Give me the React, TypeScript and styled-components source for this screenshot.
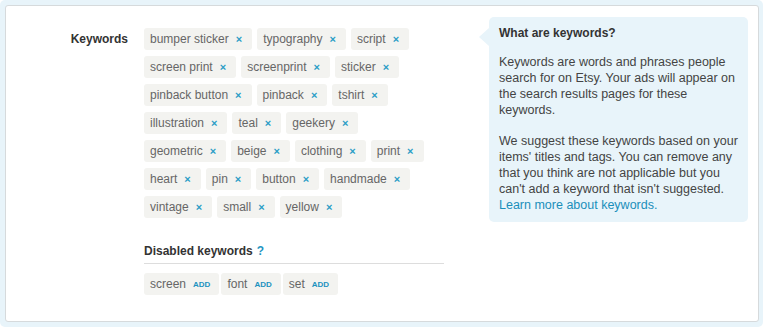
import React from "react";
import styled, { createGlobalStyle } from "styled-components";

const GlobalStyle = createGlobalStyle`
  html, body {
    margin: 0;
    padding: 0;
    background: #ffffff;
  }
  body {
    font-family: "Liberation Sans", Arial, Helvetica, sans-serif;
    -webkit-font-smoothing: antialiased;
  }
`;

const Frame = styled.div`
  box-sizing: border-box;
  width: 763px;
  height: 327px;
  padding: 5px 4px 5px 5px;
  background: #e8f4fa;
  border-radius: 5px;
`;

const Card = styled.div`
  box-sizing: border-box;
  height: 100%;
  display: flex;
  align-items: flex-start;
  background: #ffffff;
  border: 1px solid #d6dadc;
  border-radius: 3px;
`;

const Main = styled.div`
  display: grid;
  grid-template-columns: 122px 300px;
  column-gap: 16px;
  padding-top: 22px;
`;

const Label = styled.div`
  text-align: right;
  font-size: 12px;
  font-weight: bold;
  line-height: 22px;
  color: #333333;
`;

const TagList = styled.div<{ $gap?: string; $width?: number }>`
  display: flex;
  flex-wrap: wrap;
  gap: ${(p) => p.$gap ?? "6px 5px"};
  width: ${(p) => (p.$width ? `${p.$width}px` : "auto")};
`;

const Tag = styled.span<{ $padRight?: number }>`
  display: inline-flex;
  align-items: center;
  height: 22px;
  padding: 0 ${(p) => p.$padRight ?? 10}px 0 6px;
  background: #f3f3f0;
  border-radius: 3px;
  font-size: 12px;
  color: #666666;
  white-space: nowrap;
`;

const Remove = styled.span`
  margin-left: 7px;
  font-size: 11px;
  font-weight: bold;
  color: #2a9dc6;
  line-height: 1;
`;

const Add = styled.span`
  margin-left: 7px;
  font-size: 8px;
  font-weight: bold;
  color: #1d92bf;
`;

const Disabled = styled.div`
  grid-column: 2;
  margin-top: 25px;
`;

const DisabledHeading = styled.div`
  font-size: 12px;
  font-weight: bold;
  line-height: 16px;
  color: #333333;
  padding-bottom: 4px;
  border-bottom: 1px solid #dddddd;
  margin-bottom: 9px;
`;

const Help = styled.span`
  margin-left: 4px;
  color: #1f95c2;
`;

const HelpBox = styled.aside`
  position: relative;
  box-sizing: border-box;
  width: 259px;
  margin: 11px 0 0 45px;
  padding: 8px 9px 9px 10px;
  background: #e8f4fa;
  border-radius: 5px;
  font-size: 12.5px;
  line-height: 16px;
  color: #444444;

  &::before {
    content: "";
    position: absolute;
    left: -10px;
    top: 11px;
    border-style: solid;
    border-width: 9px 10px 9px 0;
    border-color: transparent #e8f4fa transparent transparent;
  }
`;

const HelpTitle = styled.h3`
  margin: 0 0 13px;
  font-size: 12px;
  line-height: 16px;
  font-weight: bold;
  color: #333333;
`;

const Para = styled.p`
  margin: 0 0 15px;
  &:last-child {
    margin-bottom: 0;
  }
`;

const Link = styled.a`
  color: #1a8fba;
  text-decoration: none;
`;

const keywords = [
  "bumper sticker",
  "typography",
  "script",
  "screen print",
  "screenprint",
  "sticker",
  "pinback button",
  "pinback",
  "tshirt",
  "illustration",
  "teal",
  "geekery",
  "geometric",
  "beige",
  "clothing",
  "print",
  "heart",
  "pin",
  "button",
  "handmade",
  "vintage",
  "small",
  "yellow",
];

const disabled = ["screen", "font", "set"];

export default function App() {
  return (
    <>
      <GlobalStyle />
      <Frame>
        <Card>
          <Main>
            <Label>Keywords</Label>
            <TagList $width={290}>
              {keywords.map((k) => (
                <Tag key={k}>
                  {k}
                  <Remove>×</Remove>
                </Tag>
              ))}
            </TagList>
            <Disabled>
              <DisabledHeading>
                Disabled keywords<Help>?</Help>
              </DisabledHeading>
              <TagList $gap="2px">
                {disabled.map((k) => (
                  <Tag key={k} $padRight={9}>
                    {k}
                    <Add>ADD</Add>
                  </Tag>
                ))}
              </TagList>
            </Disabled>
          </Main>
          <HelpBox>
            <HelpTitle>What are keywords?</HelpTitle>
            <Para>
              Keywords are words and phrases people search for on Etsy. Your ads
              will appear on the search results pages for these keywords.
            </Para>
            <Para>
              We suggest these keywords based on your items' titles and tags. You
              can remove any that you think are not applicable but you can't add a
              keyword that isn't suggested.{" "}
              <Link href="#">Learn more about keywords.</Link>
            </Para>
          </HelpBox>
        </Card>
      </Frame>
    </>
  );
}
